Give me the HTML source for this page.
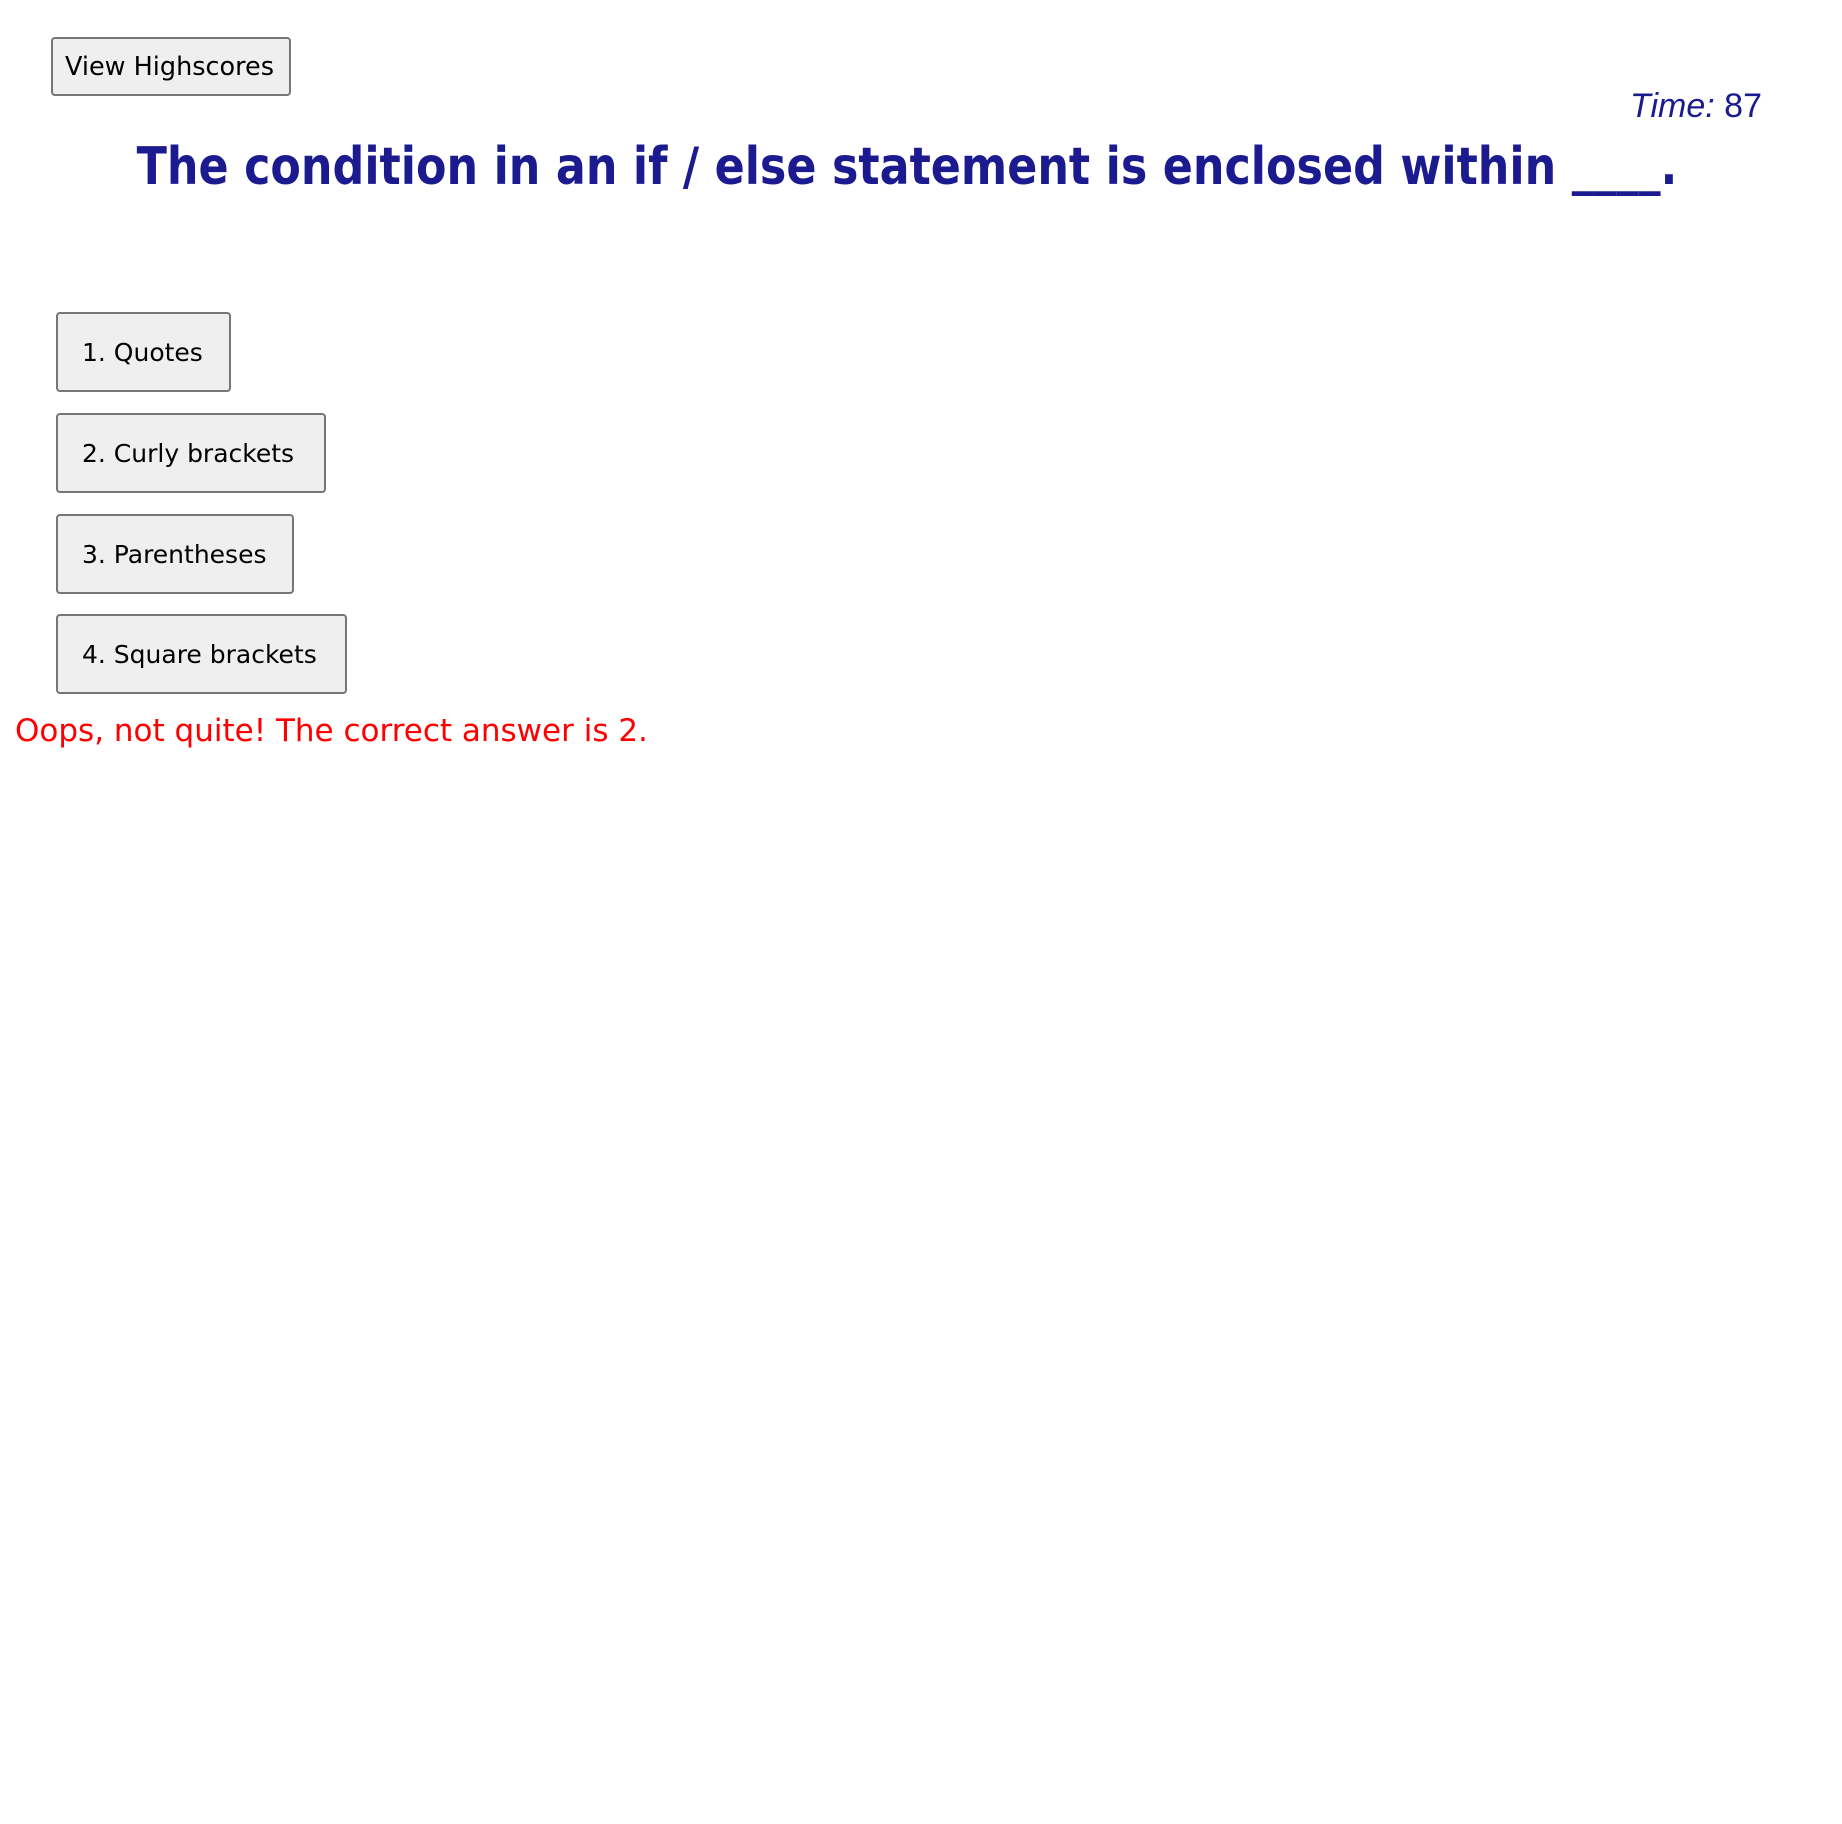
<!DOCTYPE html>
<html><head><meta charset="utf-8"><style>
html,body{margin:0;padding:0;background:#fff;width:1842px;height:1824px;overflow:hidden}
body{font-family:"DejaVu Sans","Liberation Sans",sans-serif;position:relative}
.btn{position:absolute;box-sizing:border-box;background:#efefef;border:2px solid #767676;border-radius:4px;color:#000;white-space:nowrap;display:flex;align-items:center}
#hs{left:51px;top:37px;width:240px;height:59px;font-size:25.5px;padding-left:12px}
.ans{left:56px;height:80px;font-size:25px;padding-left:24px}
#time{position:absolute;right:80px;top:87px;font-size:34px;color:#1b1b8f;font-family:"Liberation Sans",sans-serif}
#time i{font-weight:300}
h1{position:absolute;left:-14px;width:1842px;top:137px;margin:0;text-align:center;font-size:52px;font-weight:bold;color:#1b1b8f;white-space:nowrap;transform:scaleX(0.854);transform-origin:921px 0}
#fb{position:absolute;left:15px;top:713px;font-size:31px;color:#ff0000;white-space:nowrap}
</style></head><body>
<div class="btn" id="hs">View Highscores</div>
<div id="time"><i>Time:</i> 87</div>
<h1>The condition in an if / else statement is enclosed within ____.</h1>
<div class="btn ans" style="top:312px;width:175px">1. Quotes</div>
<div class="btn ans" style="top:413px;width:270px">2. Curly brackets</div>
<div class="btn ans" style="top:514px;width:238px">3. Parentheses</div>
<div class="btn ans" style="top:614px;width:291px">4. Square brackets</div>
<div id="fb">Oops, not quite! The correct answer is 2.</div>
</body></html>
